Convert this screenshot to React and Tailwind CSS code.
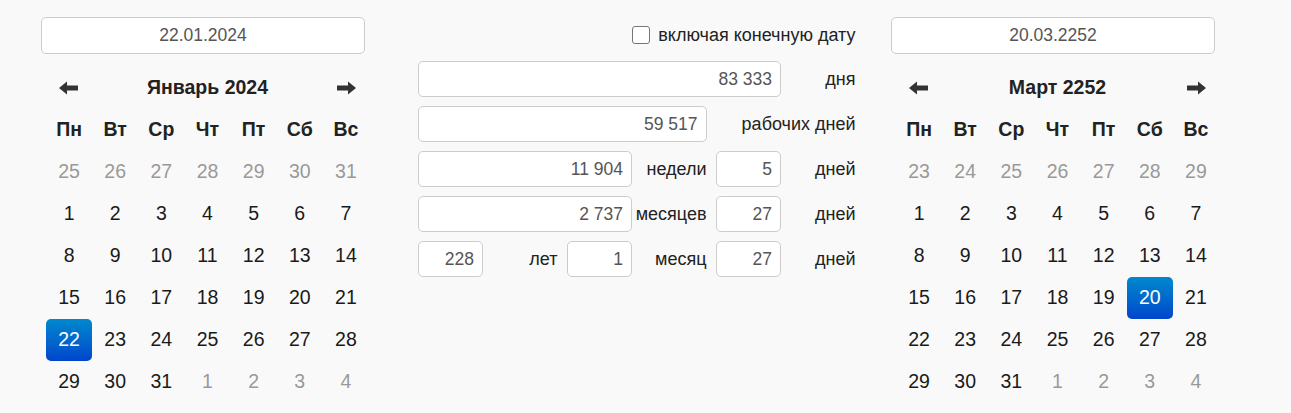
import React from 'react'

const weekdays = ['Пн', 'Вт', 'Ср', 'Чт', 'Пт', 'Сб', 'Вс']

function Arrow({ dir }) {
  return (
    <svg width="20" height="14" viewBox="0 0 20 14" className={dir === 'right' ? 'rotate-180' : ''}>
      <path d="M0 7 L8 0.5 L8 4.5 L19 4.5 L19 9.5 L8 9.5 L8 13.5 Z" fill="#333" />
    </svg>
  )
}

function Calendar({ title, weeks, selected }) {
  return (
    <div className="ml-[5px] w-[323px] mt-[13px]">
      <div className="grid grid-cols-7 h-[42px] items-center">
        <div className="flex justify-center"><Arrow dir="left" /></div>
        <div className="col-span-5 text-center font-bold text-[19.5px] text-[#222]">{title}</div>
        <div className="flex justify-center"><Arrow dir="right" /></div>
      </div>
      <div className="grid grid-cols-7">
        {weekdays.map((d) => (
          <div key={d} className="h-[42px] flex items-center justify-center font-bold text-[19.5px] text-[#222]">
            {d}
          </div>
        ))}
        {weeks.flat().map((cell, i) => {
          const isSel = cell.cur && cell.d === selected
          return (
            <div
              key={i}
              className={`h-[42px] flex items-center justify-center text-[19.5px] ${
                isSel
                  ? 'text-white rounded-[5px] bg-gradient-to-b from-[#0088cc] to-[#0044cc]'
                  : cell.cur
                  ? 'text-[#1a1a1a]'
                  : 'text-[#999]'
              }`}
            >
              {cell.d}
            </div>
          )
        })}
      </div>
    </div>
  )
}

function buildWeeks(prevDays, daysInMonth, nextDays) {
  const cells = []
  prevDays.forEach((d) => cells.push({ d, cur: false }))
  for (let d = 1; d <= daysInMonth; d++) cells.push({ d, cur: true })
  nextDays.forEach((d) => cells.push({ d, cur: false }))
  const weeks = []
  for (let i = 0; i < cells.length; i += 7) weeks.push(cells.slice(i, i + 7))
  return weeks
}

const janWeeks = buildWeeks([25, 26, 27, 28, 29, 30, 31], 31, [1, 2, 3, 4])
const marWeeks = buildWeeks([23, 24, 25, 26, 27, 28, 29], 31, [1, 2, 3, 4])

function DateColumn({ value, title, weeks, selected }) {
  return (
    <div className="w-[328px]">
      <div className="mt-[17px] w-[324px] h-[37px] bg-white border border-[#ccc] rounded-[5px] flex items-center justify-center text-[17.5px] text-[#555]">
        {value}
      </div>
      <Calendar title={title} weeks={weeks} selected={selected} />
    </div>
  )
}

function Field({ value, span }) {
  const spans = {
    1: 'col-span-1',
    3: 'col-span-3',
    4: 'col-span-4',
    5: 'col-span-5',
  }
  return (
    <div className={`${spans[span]} pr-[9.5px]`}>
      <div className="h-[36px] bg-white border border-[#ccc] rounded-[5px] flex items-center justify-end pr-[8px] text-[17.5px] text-[#555]">
        {value}
      </div>
    </div>
  )
}

function Label({ text, span = 1 }) {
  return (
    <div className={`${span === 2 ? 'col-span-2' : 'col-span-1'} pr-[9.5px] h-[36px] flex items-center justify-end whitespace-nowrap text-[18px] text-[#222]`}>
      {text}
    </div>
  )
}

export default function App() {
  return (
    <div className="w-[1291px] h-[413px] bg-[#f9f9f9] flex overflow-hidden" style={{ fontFamily: '"Liberation Sans", Arial, sans-serif' }}>
      <div className="ml-[41px]">
        <DateColumn value="22.01.2024" title="Январь 2024" weeks={janWeeks} selected={22} />
      </div>
      <div className="ml-[49px] w-[447px]">
        <div className="mt-[17px] h-[36px] pr-[9.5px] flex items-center justify-end gap-[8px] text-[18px] text-[#222]">
          <span className="w-[18px] h-[18px] mb-[1px] bg-white border border-[#767676] rounded-[3px]" />
          <span>включая конечную дату</span>
        </div>
        <div className="mt-[8px] grid grid-cols-6 gap-y-[9px]">
          <Field value="83 333" span={5} />
          <Label text="дня" />
          <Field value="59 517" span={4} />
          <Label text="рабочих дней" span={2} />
          <Field value="11 904" span={3} />
          <Label text="недели" />
          <Field value="5" span={1} />
          <Label text="дней" />
          <Field value="2 737" span={3} />
          <Label text="месяцев" />
          <Field value="27" span={1} />
          <Label text="дней" />
          <Field value="228" span={1} />
          <Label text="лет" />
          <Field value="1" span={1} />
          <Label text="месяц" />
          <Field value="27" span={1} />
          <Label text="дней" />
        </div>
      </div>
      <div className="ml-[26px]">
        <DateColumn value="20.03.2252" title="Март 2252" weeks={marWeeks} selected={20} />
      </div>
    </div>
  )
}
